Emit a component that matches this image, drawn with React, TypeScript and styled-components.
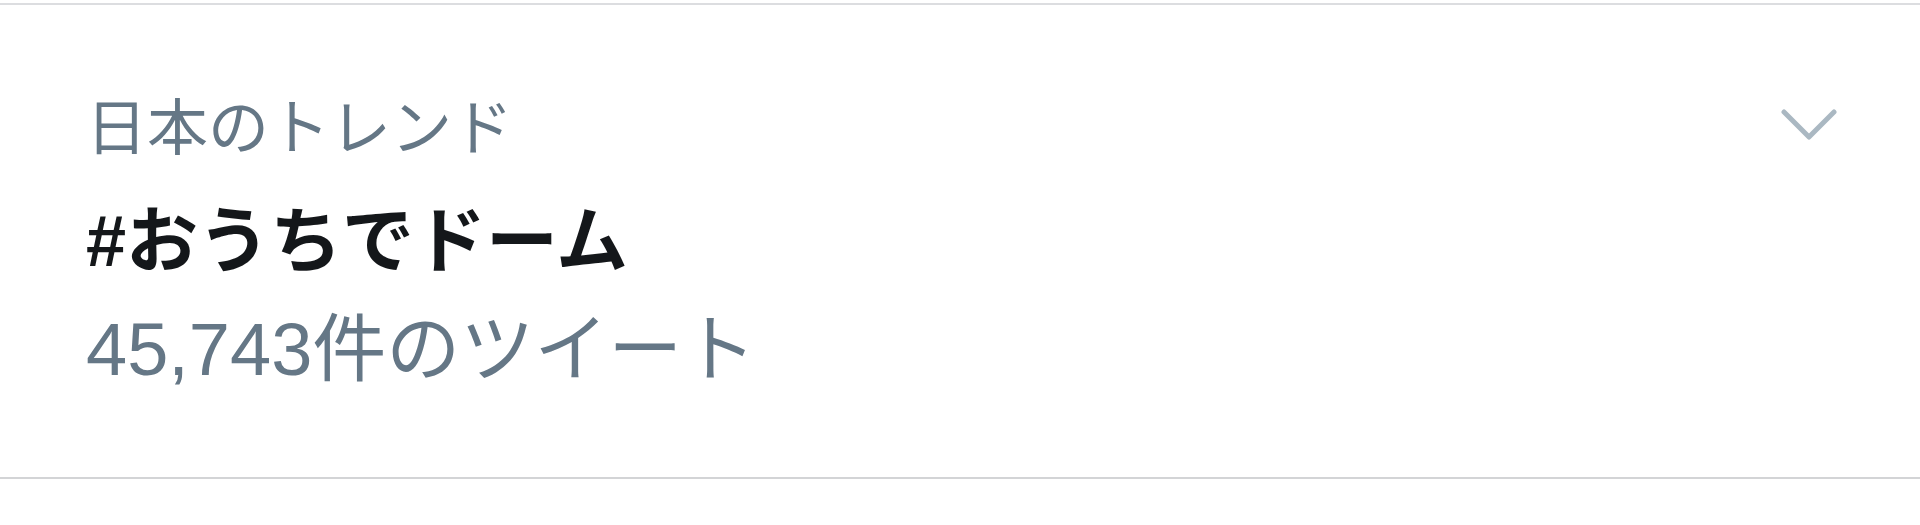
import React from "react";
import styled, { createGlobalStyle } from "styled-components";

const GlobalStyle = createGlobalStyle`
  html, body {
    margin: 0;
    padding: 0;
    background: #ffffff;
  }
  body {
    font-family: "Liberation Sans", "Noto Sans CJK JP", sans-serif;
  }
`;

const Page = styled.div`
  width: 1920px;
  height: 525px;
  padding-top: 3px;
  box-sizing: border-box;
  background: #ffffff;
`;

const TrendItem = styled.article`
  border-top: 2px solid #dcdde0;
  border-bottom: 2px solid #d3d4d6;
  padding: 88px 83px 83px 86px;
  display: flex;
  flex-direction: column;
`;

const HeaderRow = styled.div`
  display: flex;
  align-items: center;
  justify-content: space-between;
`;

const Meta = styled.div<{ $size: number; $lh: number }>`
  font-family: "Liberation Sans", "Noto Sans CJK JP", sans-serif;
  font-size: ${(p) => p.$size}px;
  line-height: ${(p) => p.$lh}px;
  color: #657786;
  font-weight: 400;
  white-space: nowrap;
`;

const Title = styled.div`
  font-family: "Liberation Sans", "Noto Sans CJK JP", sans-serif;
  font-size: 72px;
  line-height: 86px;
  font-weight: 700;
  color: #14171a;
  margin-top: 33px;
  white-space: nowrap;
`;

const Count = styled(Meta)`
  margin-top: 22px;
`;

const ChevronButton = styled.button`
  border: none;
  background: transparent;
  padding: 0;
  margin: 0 0 8px 0;
  width: 56px;
  height: 32px;
  display: flex;
  align-items: center;
  justify-content: center;
  color: #aab8c2;
  cursor: pointer;
`;

const Chevron = () => (
  <svg width="56" height="32" viewBox="0 0 56 32" fill="none">
    <polyline
      points="3,3 28,28 53,3"
      stroke="currentColor"
      strokeWidth="5"
      strokeLinecap="round"
      strokeLinejoin="round"
    />
  </svg>
);

export default function App() {
  return (
    <>
      <GlobalStyle />
      <Page>
        <TrendItem>
          <HeaderRow>
            <Meta $size={61} $lh={72}>日本のトレンド</Meta>
            <ChevronButton aria-label="more">
              <Chevron />
            </ChevronButton>
          </HeaderRow>
          <Title>#おうちでドーム</Title>
          <Count $size={74} $lh={88}>45,743件のツイート</Count>
        </TrendItem>
      </Page>
    </>
  );
}
